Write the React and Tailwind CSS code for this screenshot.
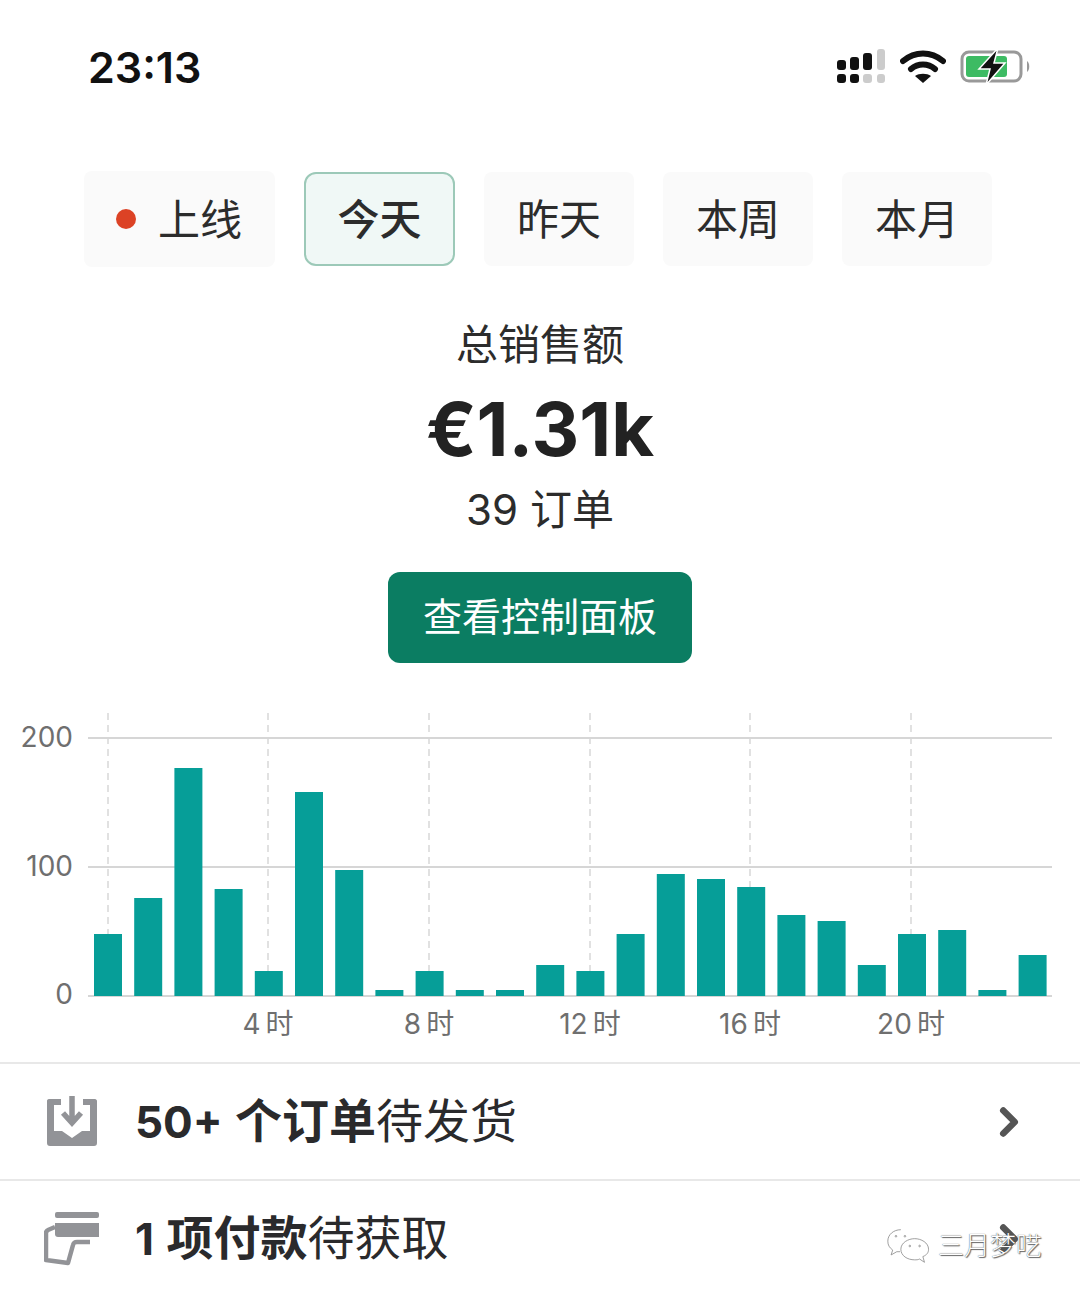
import { ChevronRight } from 'lucide-react';

const cjk = { fontFamily: 'Inter, "Noto Sans CJK SC", sans-serif' };

const bars = [934, 898, 768, 889, 971, 792, 870, 990, 971, 990, 990, 965, 971, 934, 874, 879, 887, 915, 921, 965, 934, 930, 990, 955];
const hours = [
    { x: 108, label: '' },
    { x: 268, label: '4\u2009时' },
    { x: 429, label: '8\u2009时' },
    { x: 590, label: '12\u2009时' },
    { x: 750, label: '16\u2009时' },
    { x: 911, label: '20\u2009时' },
];
const tabs = ['昨天', '本周', '本月'];

const StatusBar = () => (
    <div className="flex h-[134px] items-center justify-between pl-[88px] pr-[50px]">
        <span className="text-[43px] font-semibold text-[#111]" style={{ fontFamily: 'Inter, sans-serif' }}>23:13</span>
        <div className="flex items-center gap-[14px]">
            <svg width="50" height="36" viewBox="0 0 50 36">
                <rect x="1" y="11" width="9" height="10" rx="3" fill="#111" />
                <rect x="14" y="8" width="9" height="13" rx="3" fill="#111" />
                <rect x="27" y="4" width="9" height="17" rx="3" fill="#111" />
                <rect x="41" y="0" width="8" height="21" rx="3" fill="#ccc" />
                <rect x="1" y="25" width="9" height="9" rx="3" fill="#111" />
                <rect x="14" y="25" width="9" height="9" rx="3" fill="#111" />
                <rect x="27" y="25" width="9" height="9" rx="3" fill="#ccc" />
                <rect x="41" y="25" width="8" height="9" rx="3" fill="#ccc" />
            </svg>
            <svg width="46" height="34" viewBox="0 0 46 34" fill="none" stroke="#111" strokeWidth="6" strokeLinecap="round">
                <path d="M3 11C15 1 31 1 43 11" />
                <path d="M11 19C18 13 28 13 35 19" />
                <path d="M23 33L15 26C19 23 27 23 31 26Z" fill="#111" stroke="none" />
            </svg>
            <svg width="70" height="38" viewBox="0 0 70 38">
                <rect x="2" y="4" width="59" height="29" rx="7" fill="#fff" stroke="#999" strokeWidth="3" />
                <rect x="6" y="8" width="41" height="21" rx="3" fill="#3dbb63" />
                <path d="M67 13C70 15 70 22 67 24Z" fill="#999" />
                <path d="M38 0L19 21H30L26 37L45 15H34Z" fill="#111" stroke="#fff" strokeWidth="1.5" />
            </svg>
        </div>
    </div>
);

const Row = ({ icon, num, bold, rest }) => (
    <div className="flex h-[117px] items-center border-t-2 border-[#e8e8e8] pl-[46px] pr-[48px]">
        <div className="flex w-[89px] shrink-0">{icon}</div>
        <span className="text-[47px] text-[#2a2a2c]" style={cjk}>
            <span className="text-[44px] font-bold">{num} </span>
            <span className="ml-[2px] font-bold">{bold}</span>
            <span className="font-normal">{rest}</span>
        </span>
        <ChevronRight size={46} strokeWidth={3.4} className="ml-auto text-[#555]" />
    </div>
);

const App = () => {
    return (
        <div className="relative h-[1295px] w-[1080px] overflow-hidden bg-white" style={cjk}>
            <StatusBar />

            {/* Tabs */}
            <div className="mt-[37px] flex h-[96px] items-center gap-[29px] pl-[84px] text-[42px] text-[#2c2c2c]">
                <div className="flex h-[96px] w-[191px] items-center rounded-[8px] bg-[#fafafa] pl-[32px]">
                    <span className="h-[20px] w-[20px] rounded-full bg-[#dc4225]" />
                    <span className="ml-[22px]">上线</span>
                </div>
                <div className="flex h-[94px] w-[151px] items-center justify-center rounded-[12px] border-2 border-[#9cc9b8] bg-[#f0f8f6] font-medium">今天</div>
                {tabs.map((tab) => (
                    <div key={tab} className="flex h-[94px] w-[150px] items-center justify-center rounded-[8px] bg-[#fafafa]">{tab}</div>
                ))}
            </div>

            {/* Summary */}
            <div className="mt-[48px] flex flex-col items-center text-[#2c2c2c]">
                <div className="text-[42px] leading-[60px]">总销售额</div>
                <div className="mt-[10px] text-[74px] font-bold leading-[88px] text-[#222]">€1.31k</div>
                <div className="mt-[7px] text-[42px] leading-[60px]">39 订单</div>
                <button className="mt-[32px] h-[91px] w-[304px] rounded-[12px] bg-[#0b7d62] text-[39px] text-white">查看控制面板</button>
            </div>

            {/* Chart */}
            <svg className="mt-[37px] block" width="1080" height="362" viewBox="0 700 1080 362" style={cjk}>
                {hours.map((h) => (
                    <line key={h.x} x1={h.x} x2={h.x} y1="713" y2="996" stroke="#d8d8d8" strokeWidth="1.5" strokeDasharray="7 5" />
                ))}
                {[738, 867, 996].map((y) => (
                    <line key={y} x1="88" x2="1052" y1={y} y2={y} stroke="#d6d6d6" strokeWidth="2" />
                ))}
                {bars.map((top, i) => (
                    <rect key={i} x={94 + i * 40.2} y={top} width="28" height={996 - top} fill="#069e98" />
                ))}
                <g fill="#6f6f6f" fontSize="28" textAnchor="end">
                    <text x="73" y="747">200</text>
                    <text x="73" y="876">100</text>
                    <text x="73" y="1004">0</text>
                </g>
                <g fill="#6f6f6f" fontSize="28" textAnchor="middle">
                    {hours.map((h) => (
                        <text key={h.x} x={h.x} y="1034">{h.label}</text>
                    ))}
                </g>
            </svg>

            <Row
                num="50+"
                bold="个订单"
                rest="待发货"
                icon={
                    <svg width="52" height="52" viewBox="0 0 52 52">
                        <path d="M15 3H3C1.500 3 1 4 1 5V47C1 49 2 50 4 50H48C50 50 51 49 51 47V5C51 4 50 3 49 3H37V9H44V35H36L26 42L16 35H8V9H15Z" fill="#929397" />
                        <path d="M26 0V24M17 17L26 27L35 17" fill="none" stroke="#929397" strokeWidth="5.5" />
                    </svg>
                }
            />
            <Row
                num="1"
                bold="项付款"
                rest="待获取"
                icon={
                    <svg width="56" height="54" viewBox="0 0 56 54" className="-ml-[2px]">
                        <rect x="11" y="0" width="44" height="6" rx="2" fill="#929397" />
                        <path d="M11 11H55V25H14C12 25 11 24 11 22Z" fill="#929397" />
                        <path d="M11 15L4 18C3 19 2 19 2 21V48L24 51L29 33C29.500 31 30 30 33 30H46" fill="none" stroke="#929397" strokeWidth="4.500" strokeLinejoin="round" />
                    </svg>
                }
            />

            {/* Watermark */}
            <div className="absolute left-[887px] top-[1226px] flex items-center gap-[7px]">
                <svg width="44" height="38" viewBox="0 0 54 42" fill="none" stroke="#8a8a8a" strokeWidth="1">
                    <path d="M17 1C8 1 1 7 1 15C1 20 3 23 7 26L5 32L12 28H16" fill="#fff" />
                    <path d="M34 12C26 12 17 17 17 25C17 33 25 38 34 38C36 38 38 38 40 37L46 41L44 34C49 32 51 29 51 25C51 17 42 12 34 12Z" fill="#fff" />
                    <circle cx="11" cy="9" r="1" />
                    <circle cx="22" cy="9" r="1" />
                    <circle cx="28" cy="21" r="1" />
                    <circle cx="40" cy="21" r="1" />
                </svg>
                <span className="text-[26px] font-light text-white [text-shadow:0_0_1px_#333,1px_1px_1px_#666]">三月梦呓</span>
            </div>
        </div>
    );
};

export default App;
